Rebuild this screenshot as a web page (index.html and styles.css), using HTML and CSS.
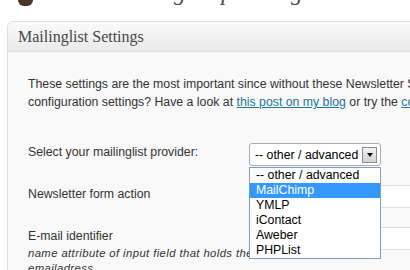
FILE: index.html
```html
<!DOCTYPE html>
<html lang="en">
<head>
    <meta charset="UTF-8">
    <title>Newsletter Sign-Up Settings</title>
    <link rel="stylesheet" href="styles.css">
</head>
<body>
    <div class="wrap">
        <div class="page-head">
            <span class="page-icon"></span>
            <h2>Newsletter Sign-Up Settings</h2>
        </div>

        <div class="postbox">
            <h3 class="postbox-title">Mailinglist Settings</h3>
            <div class="inside">
                <p class="intro">
                    These settings are the most important since without these Newsletter Sign-Up can't do anything. Need help with the<br>
                    configuration settings? Have a look at <a href="#">this post on my blog</a> or try the <a href="#">configuration extractor</a>.
                </p>

                <div class="form-row">
                    <label class="row-label">Select your mailinglist provider:</label>
                    <div class="field">
                        <div class="select">
                            <span>-- other / advanced</span>
                            <span class="select-arrow"></span>
                        </div>
                        <ul class="select-list">
                            <li>-- other / advanced</li>
                            <li class="active">MailChimp</li>
                            <li>YMLP</li>
                            <li>iContact</li>
                            <li>Aweber</li>
                            <li>PHPList</li>
                        </ul>
                    </div>
                </div>

                <div class="form-row">
                    <label class="row-label">Newsletter form action</label>
                    <div class="field">
                        <input class="text-input" type="text">
                    </div>
                </div>

                <div class="form-row">
                    <label class="row-label">
                        E-mail identifier
                        <small>name attribute of input field that holds the emailadress</small>
                    </label>
                    <div class="field">
                        <input class="text-input" type="text">
                    </div>
                </div>
            </div>
        </div>
    </div>
</body>
</html>
```

FILE: styles.css
```css
body {
    margin: 0;
    background: #fff;
    font-family: 'Liberation Sans', Arial, sans-serif;
    font-size: 12.3px;
    color: #333;
    overflow: hidden;
}

.wrap {
    width: 660px;
}

.page-head {
    height: 21px;
    overflow: hidden;
    display: flex;
    gap: 19px;
    padding-left: 18px;
}

.page-icon {
    width: 15px;
    height: 6px;
    background: #4b3526;
    border-radius: 0 0 7px 7px;
}

.page-head h2 {
    margin: -19px 0 0;
    font: italic 23px/24px 'Liberation Serif', Georgia, serif;
    color: #464646;
    font-weight: normal;
    white-space: nowrap;
}

.postbox {
    margin-left: 7px;
    border: 1px solid #dfdfdf;
    border-radius: 6px 6px 0 0;
    background: #f9f9f9;
    height: 300px;
}

.postbox-title {
    margin: 0;
    padding: 1px 10px 0;
    height: 28px;
    font: normal 16px/28px 'Liberation Serif', Georgia, serif;
    color: #464646;
    background: linear-gradient(#fafafa, #eaeaea);
    border-bottom: 1px solid #dfdfdf;
    border-radius: 6px 6px 0 0;
}

.inside {
    padding: 23px 0 0 20px;
}

.intro {
    margin: 0 0 32px;
    line-height: 18px;
    white-space: nowrap;
}

.intro a {
    color: #21759b;
}

.form-row {
    display: flex;
    align-items: flex-start;
    margin-bottom: 19px;
}

.row-label {
    width: 221px;
    flex-shrink: 0;
    line-height: 18px;
    color: #333;
}

.row-label small {
    display: block;
    width: 240px;
    margin-top: 1px;
    font-size: 11.3px;
    font-style: italic;
    letter-spacing: 0.4px;
    line-height: 15px;
}

.field {
    position: relative;
}

.select {
    width: 132px;
    height: 23px;
    box-sizing: border-box;
    display: flex;
    align-items: center;
    justify-content: space-between;
    padding: 0 3px 0 5px;
    background: #fff;
    border: 1px solid #a5acb2;
    border-radius: 3px;
    color: #000;
    white-space: nowrap;
}

.select-arrow {
    width: 15px;
    height: 16px;
    box-sizing: border-box;
    border: 1px solid #8c8c8c;
    background: linear-gradient(#f2f2f2, #d2d2d2);
    display: flex;
    align-items: center;
    justify-content: center;
}

.select-arrow::after {
    content: '';
    border-left: 3px solid transparent;
    border-right: 3px solid transparent;
    border-top: 4px solid #000;
}

.select-list {
    position: absolute;
    top: 24px;
    left: 0;
    width: 132px;
    box-sizing: border-box;
    margin: 0;
    padding: 0;
    list-style: none;
    background: #fff;
    border: 1px solid #7f9db9;
    color: #000;
    white-space: nowrap;
    z-index: 2;
}

.select-list li {
    height: 15px;
    line-height: 15px;
    padding-left: 6px;
}

.select-list li.active {
    background: #3399ff;
    color: #fff;
}

.text-input {
    display: block;
    width: 320px;
    height: 23px;
    box-sizing: border-box;
    margin: 0;
    border: 1px solid #dfdfdf;
    border-radius: 3px;
    background: #fff;
}
```
